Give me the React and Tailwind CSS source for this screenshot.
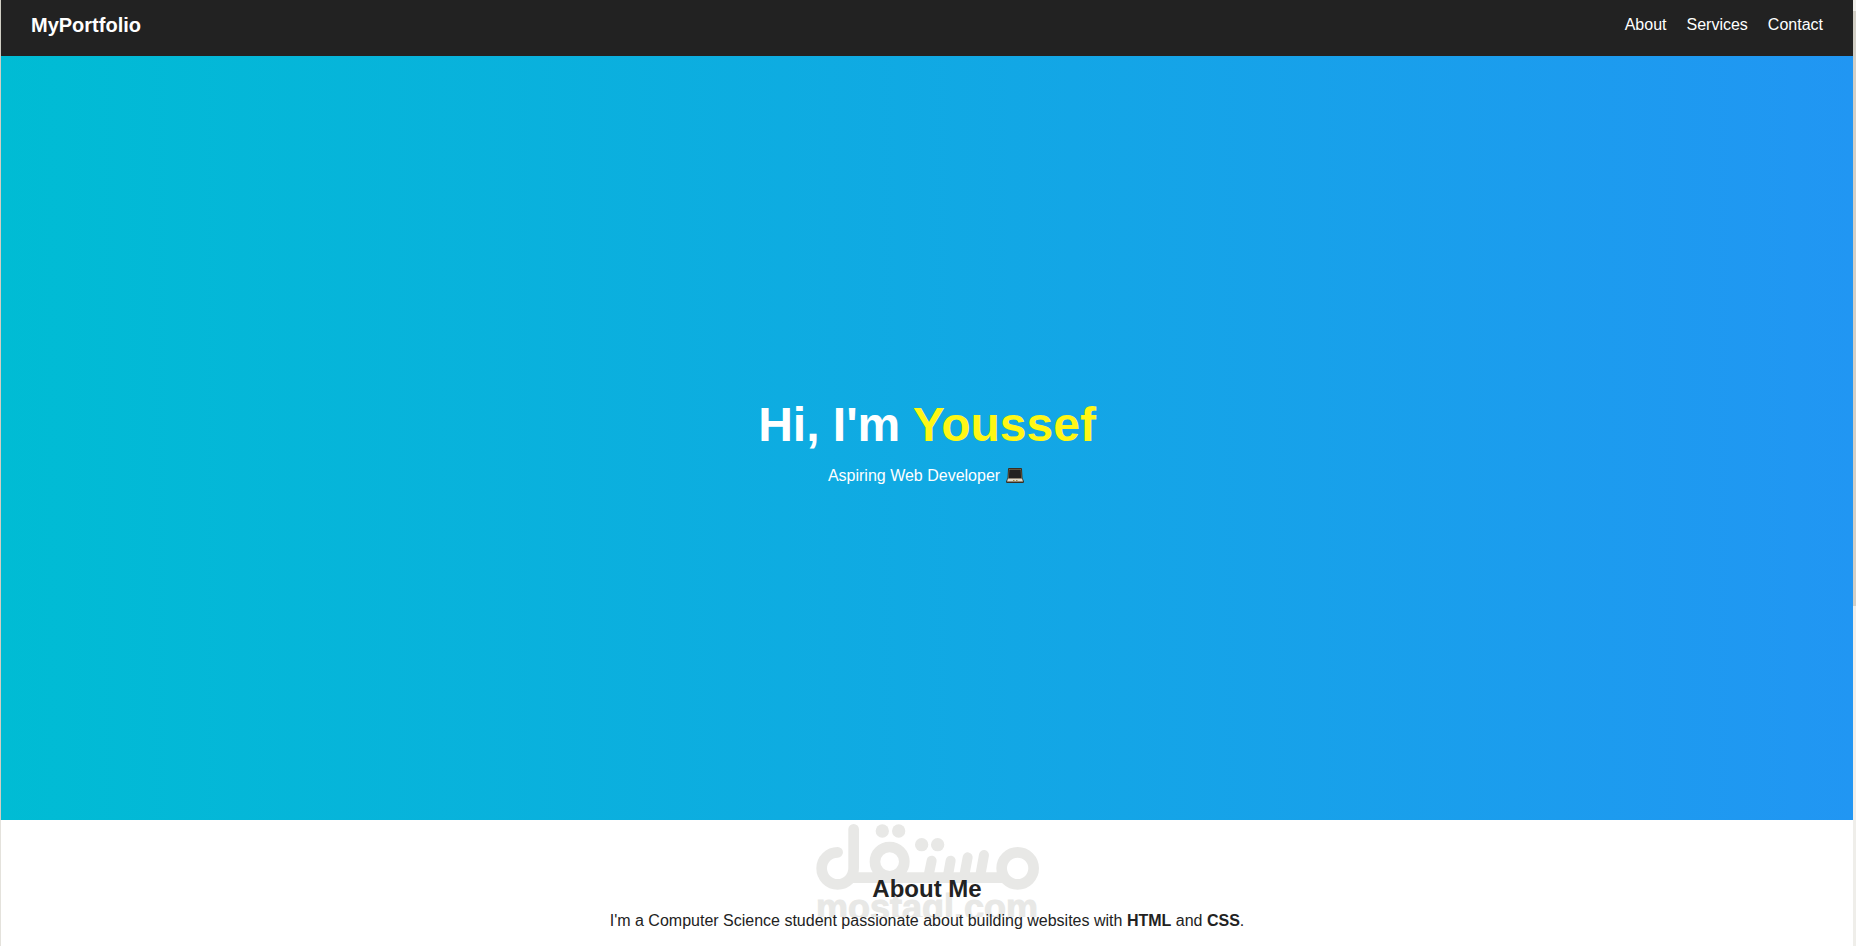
import React from "react";

const links = [
  { label: "About", href: "#about" },
  { label: "Services", href: "#services" },
  { label: "Contact", href: "#contact" },
];

function Laptop() {
  return (
    <svg
      role="img"
      aria-label="laptop"
      viewBox="0 0 18 15"
      className="ml-1.5 mr-0.5 inline-block h-[15px] w-[18px] align-[-2px]"
    >
      <path d="M3 0h12a1 1 0 0 1 1 1l.5 9H1.500L2 1a1 1 0 0 1 1-1z" fill="#3a2e20" />
      <path d="M3 1h12l.5 9h-13z" fill="#9c8a62" />
      <path d="M3.300 1.500h11.400l.4 8.500H2.900z" fill="#222222" />
      <path d="M1.500 10h15l1.500 3.500-.5 1.500H.5L0 13.500z" fill="#3a2e20" />
      <path d="M2 10.500h14l1 3H1z" fill="#ddd9cc" />
      <path d="M7 12.500h1.500M10 12.500h1.500" stroke="#a58a3c" />
    </svg>
  );
}

function Watermark() {
  return (
    <div className="pointer-events-none absolute left-1/2 top-1 flex -translate-x-1/2 flex-col items-center text-[#e8e8e6]">
      <svg
        viewBox="78 42 669 198"
        className="h-[66px] w-[223px] shrink-0"
        fill="none"
        stroke="currentColor"
        strokeWidth="32"
        strokeLinecap="round"
        aria-hidden="true"
      >
        <path d="M191 58V175A48 48 0 1 1 143 127" />
        <path d="M180 203H648" strokeLinecap="butt" />
        <circle cx="299" cy="155" r="44" />
        <circle cx="683" cy="175" r="48" />
        <path d="M425 152L416 196M482 152L474 196M533 142L523 196M582 135L571 196" strokeWidth="30" />
        <g fill="currentColor" stroke="none">
          <circle cx="277" cy="63" r="20" />
          <circle cx="326" cy="63" r="20" />
          <circle cx="395" cy="104" r="20" />
          <circle cx="443" cy="104" r="20" />
        </g>
      </svg>
      <span className="h-[27px] overflow-hidden px-px text-[36px] font-bold leading-9 [-webkit-text-stroke:1px_#e8e8e6]">
        mostaql.com
      </span>
    </div>
  );
}

export default function App() {
  return (
    <div className="flex h-screen overflow-hidden bg-white font-['Liberation_Sans',Arial,sans-serif] text-[#222222]">
      <div className="flex w-px shrink-0 flex-col">
        <div className="h-[820px] bg-[#d0cec4]" />
        <div className="grow bg-[#e4e2dc]" />
      </div>
      <div className="min-w-0 grow">
        <header className="flex h-14 items-start justify-between bg-[#222222] px-[30px] pt-[13px] text-white">
          <div className="text-xl leading-6 font-bold">MyPortfolio</div>
          <nav className="flex gap-5 text-base leading-6">
            {links.map((l) => (
              <a key={l.label} href={l.href}>
                {l.label}
              </a>
            ))}
          </nav>
        </header>
        <section className="flex h-[764px] flex-col items-center justify-center bg-linear-to-r/srgb from-[#00bcd4] to-[#2196f3] pt-[7px] text-center text-white">
          <h1 className="text-5xl leading-14 font-bold">
            Hi, I'm <span className="text-[#fff714]">Youssef</span>
          </h1>
          <p className="mt-[13px] text-base leading-5">
            Aspiring Web Developer
            <Laptop />
          </p>
        </section>
        <section id="about" className="relative px-5 pt-[55px] text-center">
          <Watermark />
          <div className="relative">
            <h2 className="text-2xl leading-7 font-bold">About Me</h2>
            <p className="mt-2 text-base leading-5">
              I'm a Computer Science student passionate about building websites with{" "}
              <strong>HTML</strong> and <strong>CSS</strong>.
            </p>
          </div>
        </section>
      </div>
      <div className="flex w-[3px] shrink-0 flex-col bg-[#efeeea]">
        <div className="h-[11px]" />
        <div className="h-[595px] bg-[#d2cfc6]" />
      </div>
    </div>
  );
}
